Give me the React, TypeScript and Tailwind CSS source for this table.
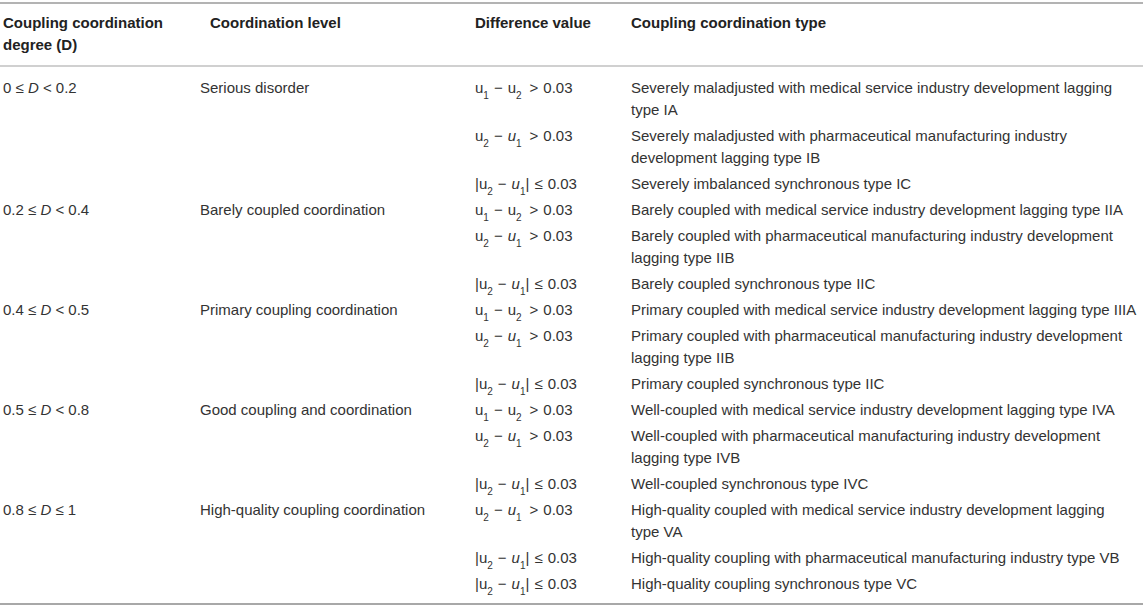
import React from "react";

const U = ({ n, it }: { n: number; it?: boolean }) => (
  <span>
    {it ? <i>u</i> : "u"}
    <sub className="text-[10px] align-[-3px] leading-none">{n}</sub>
  </span>
);

const Minus = () => <span className="mx-[5px]">−</span>;

const Gt12 = () => (
  <span>
    <U n={1} />
    <Minus />
    <U n={2} />
    <span className="ml-[8px] mr-[5px]">&gt;</span>0.03
  </span>
);
const Gt21 = () => (
  <span>
    <U n={2} />
    <Minus />
    <U n={1} it />
    <span className="ml-[8px] mr-[5px]">&gt;</span>0.03
  </span>
);
const Abs = () => (
  <span>
    |<U n={2} />
    <Minus />
    <U n={1} it />|<span className="ml-[5px] mr-[5px]">≤</span>0.03
  </span>
);

type Sub = { diff: React.ReactNode; type: string };
type Group = { d: React.ReactNode; level: string; subs: Sub[] };

const D = () => <i>D</i>;

const groups: Group[] = [
  {
    d: (
      <span>
        0 ≤ <D /> &lt; 0.2
      </span>
    ),
    level: "Serious disorder",
    subs: [
      { diff: <Gt12 />, type: "Severely maladjusted with medical service industry development lagging type IA" },
      { diff: <Gt21 />, type: "Severely maladjusted with pharmaceutical manufacturing industry development lagging type IB" },
      { diff: <Abs />, type: "Severely imbalanced synchronous type IC" },
    ],
  },
  {
    d: (
      <span>
        0.2 ≤ <D /> &lt; 0.4
      </span>
    ),
    level: "Barely coupled coordination",
    subs: [
      { diff: <Gt12 />, type: "Barely coupled with medical service industry development lagging type IIA" },
      { diff: <Gt21 />, type: "Barely coupled with pharmaceutical manufacturing industry development lagging type IIB" },
      { diff: <Abs />, type: "Barely coupled synchronous type IIC" },
    ],
  },
  {
    d: (
      <span>
        0.4 ≤ <D /> &lt; 0.5
      </span>
    ),
    level: "Primary coupling coordination",
    subs: [
      { diff: <Gt12 />, type: "Primary coupled with medical service industry development lagging type IIIA" },
      { diff: <Gt21 />, type: "Primary coupled with pharmaceutical manufacturing industry development lagging type IIB" },
      { diff: <Abs />, type: "Primary coupled synchronous type IIC" },
    ],
  },
  {
    d: (
      <span>
        0.5 ≤ <D /> &lt; 0.8
      </span>
    ),
    level: "Good coupling and coordination",
    subs: [
      { diff: <Gt12 />, type: "Well-coupled with medical service industry development lagging type IVA" },
      { diff: <Gt21 />, type: "Well-coupled with pharmaceutical manufacturing industry development lagging type IVB" },
      { diff: <Abs />, type: "Well-coupled synchronous type IVC" },
    ],
  },
  {
    d: (
      <span>
        0.8 ≤ <D /> ≤ 1
      </span>
    ),
    level: "High-quality coupling coordination",
    subs: [
      { diff: <Gt21 />, type: "High-quality coupled with medical service industry development lagging type VA" },
      { diff: <Abs />, type: "High-quality coupling with pharmaceutical manufacturing industry type VB" },
      { diff: <Abs />, type: "High-quality coupling synchronous type VC" },
    ],
  },
];

export default function App() {
  return (
    <div
      className="bg-white w-[1143px] h-[610px] pt-[2px] text-[15px] text-[#333]"
      style={{ fontFamily: '"Liberation Sans", Arial, Helvetica, sans-serif' }}
    >
      <table className="w-[1143px] table-fixed border-collapse leading-[22px]">
        <colgroup>
          <col className="w-[197px]" />
          <col className="w-[275px]" />
          <col className="w-[156px]" />
          <col />
        </colgroup>
        <thead>
          <tr className="border-t-2 border-b-2 border-t-[#b3b3b3] border-b-[#d0d0d0] font-bold text-[#222] align-top text-left">
            <th className="px-[3px] pt-[8px] pb-[9px] font-bold">Coupling coordination degree (D)</th>
            <th className="pl-[13px] pr-[3px] pt-[8px] pb-[9px] font-bold">Coordination level</th>
            <th className="px-[3px] pt-[8px] pb-[9px] font-bold">Difference value</th>
            <th className="px-[3px] pt-[8px] pb-[9px] font-bold">Coupling coordination type</th>
          </tr>
        </thead>
        <tbody className="border-b-2 border-b-[#a8a8a8]">
          {groups.map((g, gi) =>
            g.subs.map((s, si) => {
              const first = gi === 0 && si === 0;
              const last = gi === groups.length - 1 && si === g.subs.length - 1;
              const pad = first ? "pt-[10px] pb-[2px]" : last ? "pt-[2px] pb-[8px]" : "py-[2px]";
              return (
                <tr key={`${gi}-${si}`} className="align-top">
                  {si === 0 && (
                    <>
                      <td rowSpan={g.subs.length} className={`px-[3px] ${first ? "pt-[10px]" : "pt-[2px]"}`}>
                        {g.d}
                      </td>
                      <td rowSpan={g.subs.length} className={`px-[3px] ${first ? "pt-[10px]" : "pt-[2px]"}`}>
                        {g.level}
                      </td>
                    </>
                  )}
                  <td className={`px-[3px] whitespace-nowrap ${pad}`}>{s.diff}</td>
                  <td className={`pl-[3px] pr-0 ${pad}`}>{s.type.replace(/ (\S+)$/, "\u00a0$1")}</td>
                </tr>
              );
            })
          )}
        </tbody>
      </table>
    </div>
  );
}
